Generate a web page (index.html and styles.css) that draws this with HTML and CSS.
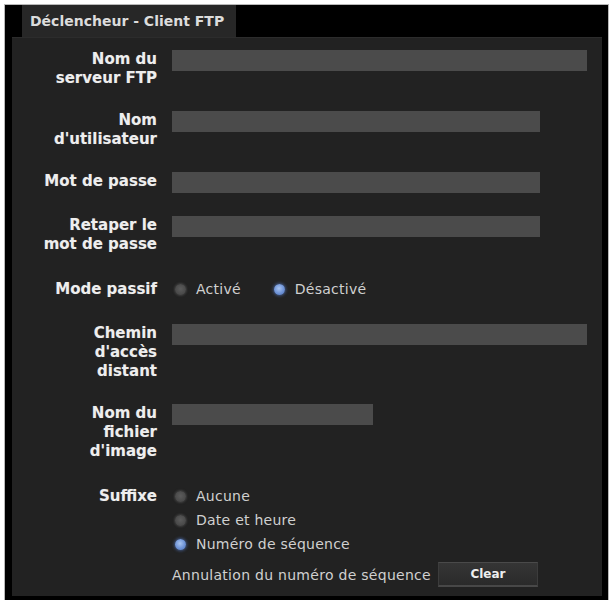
FILE: index.html
```html
<!DOCTYPE html>
<html lang="fr">
<head>
<meta charset="utf-8">
<title>Déclencheur - Client FTP</title>
<link rel="stylesheet" href="styles.css">
</head>
<body>
<div class="frame">
  <div class="tabs"><div class="tab">Déclencheur - Client FTP</div></div>
  <div class="panel">
    <div class="form">
      <div class="label">Nom du<br>serveur FTP</div>
      <div class="field"><input class="text w-full" type="text"></div>

      <div class="label">Nom<br>d'utilisateur</div>
      <div class="field"><input class="text w-mid" type="text"></div>

      <div class="label">Mot de passe</div>
      <div class="field"><input class="text w-mid" type="password"></div>

      <div class="label">Retaper le<br>mot de passe</div>
      <div class="field"><input class="text w-mid" type="password"></div>

      <div class="label label-radio">Mode passif</div>
      <div class="field radio-line">
        <label class="radio"><input type="radio" name="passif"><span>Activé</span></label>
        <label class="radio"><input type="radio" name="passif" checked><span>Désactivé</span></label>
      </div>

      <div class="label">Chemin<br>d'accès<br>distant</div>
      <div class="field"><input class="text w-full" type="text"></div>

      <div class="label">Nom du<br>fichier<br>d'image</div>
      <div class="field"><input class="text w-short" type="text"></div>

      <div class="label label-radio">Suffixe</div>
      <div class="field">
        <div class="radio-stack">
          <label class="radio"><input type="radio" name="suffixe"><span>Aucune</span></label>
          <label class="radio"><input type="radio" name="suffixe"><span>Date et heure</span></label>
          <label class="radio"><input type="radio" name="suffixe" checked><span>Numéro de séquence</span></label>
        </div>
        <div class="reset-line">
          <span>Annulation du numéro de séquence</span>
          <button class="btn" type="button">Clear</button>
        </div>
      </div>
    </div>
  </div>
</div>
</body>
</html>
```
FILE: styles.css
```css
html, body {
  margin: 0;
  padding: 0;
  background: #ffffff;
}

body {
  font-family: "DejaVu Sans", Verdana, sans-serif;
}

.frame {
  margin: 5px 0 0 5px;
  width: 603px;
  height: 595px;
  background: #000000;
  box-shadow: 0 0 0 1px #b8b8b8;
  display: flex;
  flex-direction: column;
}

.tabs {
  height: 32px;
  display: flex;
  padding-left: 17px;
}

.tab {
  width: 206px;
  padding-left: 8px;
  background: #272727;
  color: #dcdcdc;
  font-size: 14px;
  font-weight: bold;
  line-height: 32px;
  white-space: nowrap;
}

.panel {
  margin: 0 6px 4px 7px;
  height: 559px;
  background: #222222;
  border-top: 1px solid #2c2c2c;
  box-sizing: border-box;
  padding: 12px 15px 0 12px;
}

.form {
  display: grid;
  grid-template-columns: 133px 1fr;
  column-gap: 15px;
  row-gap: 23px;
  align-items: start;
}

.label {
  text-align: right;
  color: #eeeeee;
  font-size: 15px;
  font-weight: bold;
  line-height: 19px;
  white-space: nowrap;
  text-shadow: 0 0 1px rgba(255, 255, 255, 0.25);
}

.label-radio {
  line-height: 24px;
}

.field {
  min-width: 0;
}

.text {
  display: block;
  height: 21px;
  margin: 0;
  padding: 0 4px;
  border: 0;
  background: #4b4b4b;
  color: #eeeeee;
  box-sizing: border-box;
  font: 13px "DejaVu Sans", sans-serif;
}

.w-full { width: 415px; }
.w-mid { width: 368px; }
.w-short { width: 201px; }

.radio-line {
  display: flex;
  gap: 30px;
  height: 24px;
}

.radio-stack {
  display: flex;
  flex-direction: column;
}

.radio {
  display: flex;
  align-items: center;
  height: 24px;
  gap: 10px;
  padding-left: 3px;
  color: #d0d0d0;
  font-size: 14px;
  letter-spacing: 0.25px;
  white-space: nowrap;
}

.radio input {
  appearance: none;
  -webkit-appearance: none;
  margin: 0;
  width: 11px;
  height: 11px;
  border-radius: 50%;
  background: radial-gradient(circle at 50% 45%, #5c5c5c 0%, #4b4b4b 60%, #3c3c3c 100%);
  box-shadow: 0 0 2px 1px rgba(70, 70, 70, 0.8);
}

.radio input:checked {
  background: radial-gradient(circle at 45% 40%, #a8c4f0 0%, #6d92d6 55%, #4a6fb5 100%);
  box-shadow: 0 0 3px 1px rgba(90, 130, 210, 0.55);
}

.reset-line {
  margin-top: 6px;
  display: flex;
  align-items: center;
  gap: 7px;
  color: #d0d0d0;
  font-size: 14px;
  letter-spacing: 0.28px;
  white-space: nowrap;
}

.btn {
  width: 100px;
  height: 25px;
  margin: 0;
  padding: 0;
  border: 1px solid #3c3c3c;
  border-top-color: #4a4a4a;
  border-bottom: 2px solid #484848;
  background: linear-gradient(#353535, #2a2a2a);
  color: #eeeeee;
  font: bold 12px "DejaVu Sans", sans-serif;
  letter-spacing: 0;
  box-sizing: border-box;
}
```
